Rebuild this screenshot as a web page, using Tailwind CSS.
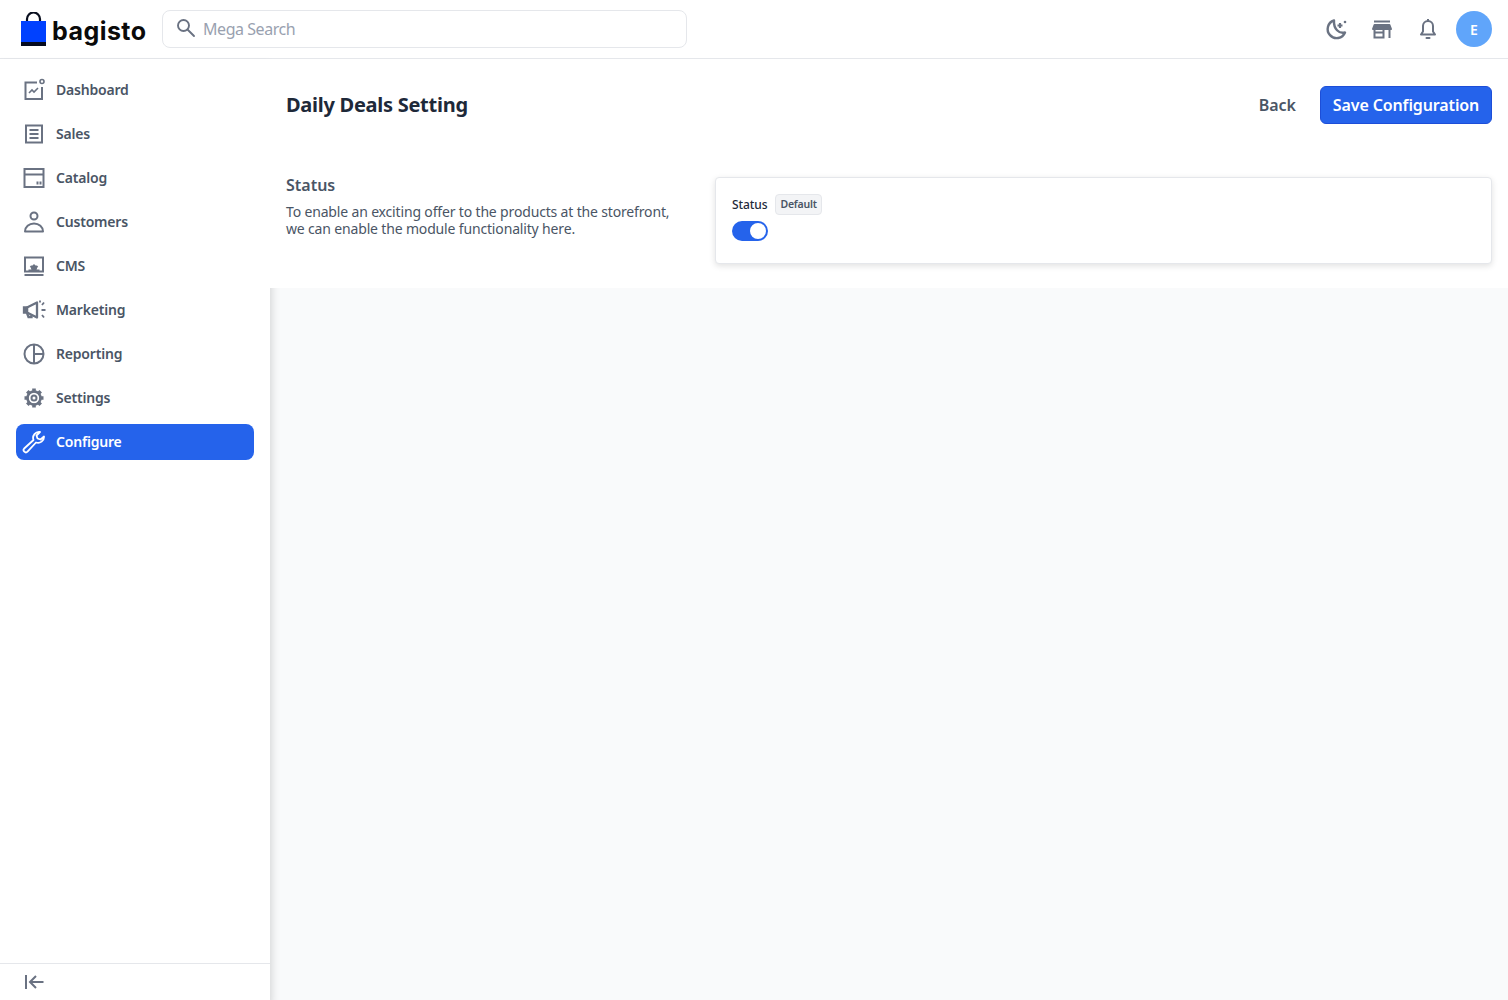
<!DOCTYPE html>
<html lang="en">
<head>
    <meta charset="UTF-8">
    <meta name="viewport" content="width=device-width, initial-scale=1.0">
    <title>Daily Deals Setting</title>
    <script src="https://cdn.jsdelivr.net/npm/@tailwindcss/browser@4"></script>
</head>
<body class="font-['Noto_Sans',sans-serif] bg-[#f9fafb] text-gray-600 h-[1000px] overflow-hidden">
    <!-- Top bar -->
    <header class="h-[59px] bg-white border-b border-gray-200 flex items-center justify-between pl-[20px] pr-[16px]">
        <div class="flex items-center">
            <svg class="w-[27px] h-[35px]" viewBox="0 0 27 35">
                <path d="M7 11V7a6.500 6.500 0 0 1 13 0v4" fill="none" stroke="#0a0f1f" stroke-width="2.200"/>
                <rect x="1" y="9" width="25" height="22" fill="#0041ff"/>
                <rect x="1" y="30" width="25" height="4" fill="#060b1e"/>
            </svg>
            <span class="ml-[5px] w-[110px] pt-[4px] font-['Inter',sans-serif] font-bold text-[25px] leading-none text-[#0a0a0a] tracking-[0.45px]">bagisto</span>
            <div class="h-[38px] w-[525px] border border-gray-200 rounded-lg flex items-center px-[13px]">
                <svg class="w-[20px] h-[20px] text-gray-500 mt-[-3px]" viewBox="0 0 20 20" fill="none" stroke="currentColor" stroke-width="1.900"><circle cx="7.500" cy="7.500" r="5.500"/><path d="M11.500 11.500 18 18" stroke-linecap="round"/></svg>
                <span class="ml-[7px] text-[16px] text-gray-400 tracking-[-0.45px]">Mega Search</span>
            </div>
        </div>
        <div class="flex items-center">
            <svg class="w-[24px] h-[24px] text-gray-500" viewBox="0 0 24 24" fill="none" stroke="currentColor" stroke-width="2.400"><path d="M10 3.500a9 9 0 1 0 11 12c-6 1.500-11.500-3.500-11-12Z" stroke-linejoin="round"/><path d="M16 6v5M13.500 8.500h5" stroke-width="2.200"/><circle cx="21" cy="5" r="1.300" fill="currentColor" stroke="none"/></svg>
            <svg class="w-[22px] h-[22px] ml-[23px] text-gray-500" viewBox="0 0 22 22" fill="none" stroke="currentColor" stroke-width="2"><path d="M3 3.500h16"/><path d="M3.500 7h15l1.500 4H2Z" stroke-linejoin="round" fill="currentColor"/><path d="M3.500 11v8.500h9V11M3.500 14.500h9M18.500 11v9"/></svg>
            <svg class="w-[22px] h-[24px] ml-[24px] text-gray-500" viewBox="0 0 22 24" fill="none" stroke="currentColor" stroke-width="2"><path d="M4 17.500h14l-2-3V9a5 5 0 0 0-10 0v5.500l-2 3Z" stroke-linejoin="round"/><path d="M11 2v2"/><path d="M9.500 21h3" stroke-linecap="round"/></svg>
            <div class="w-[36px] h-[36px] ml-[17px] rounded-full bg-[#60a5fa] text-white text-[14px] font-semibold flex items-center justify-center">E</div>
        </div>
    </header>

    <div class="flex h-[941px]">
        <!-- Sidebar -->
        <aside class="w-[270px] bg-white flex flex-col justify-between shadow-[0_8px_10px_0_rgba(0,0,0,0.2)]">
            <nav class="pt-[13px] px-[16px] flex flex-col gap-[8px]">
                <a class="h-[36px] flex items-center gap-[10px] px-[6px] rounded-lg text-[14px] font-semibold text-gray-600 tracking-[-0.2px]">
                    <svg class="w-[24px] h-[24px] text-gray-500 shrink-0" viewBox="0 0 24 24" fill="none" stroke="currentColor" stroke-width="2"><path d="M15 4.500H3.500v16.500h16.500V9"/><circle cx="20" cy="3.500" r="2" stroke-width="1.600"/><path d="m7 15 3-3 2 2 4-4" stroke-width="1.600"/></svg>
                    <span class="mt-[-2px]">Dashboard</span>
                </a>
                <a class="h-[36px] flex items-center gap-[10px] px-[6px] rounded-lg text-[14px] font-semibold text-gray-600 tracking-[-0.2px]">
                    <svg class="w-[24px] h-[24px] text-gray-500 shrink-0" viewBox="0 0 24 24" fill="none" stroke="currentColor" stroke-width="2"><rect x="4" y="3.500" width="16" height="17"/><path d="M7.500 8h9M7.500 12h9M7.500 16h9"/></svg>
                    <span class="mt-[-2px]">Sales</span>
                </a>
                <a class="h-[36px] flex items-center gap-[10px] px-[6px] rounded-lg text-[14px] font-semibold text-gray-600 tracking-[-0.2px]">
                    <svg class="w-[24px] h-[24px] text-gray-500 shrink-0" viewBox="0 0 24 24" fill="none" stroke="currentColor" stroke-width="2"><rect x="2.500" y="3" width="19" height="18"/><path d="M2.500 8.500h19M15.500 15.500v3M18.500 15.500v3"/></svg>
                    <span class="mt-[-2px]">Catalog</span>
                </a>
                <a class="h-[36px] flex items-center gap-[10px] px-[6px] rounded-lg text-[14px] font-semibold text-gray-600 tracking-[-0.2px]">
                    <svg class="w-[24px] h-[24px] text-gray-500 shrink-0" viewBox="0 0 24 24" fill="none" stroke="currentColor" stroke-width="2"><circle cx="12" cy="6" r="3.500"/><path d="M3 21.500c0-4.500 4-8 9-8s9 3.500 9 8Z" stroke-linejoin="round"/></svg>
                    <span class="mt-[-2px]">Customers</span>
                </a>
                <a class="h-[36px] flex items-center gap-[10px] px-[6px] rounded-lg text-[14px] font-semibold text-gray-600 tracking-[-0.2px]">
                    <svg class="w-[24px] h-[24px] text-gray-500 shrink-0" viewBox="0 0 24 24" fill="none" stroke="currentColor" stroke-width="2"><rect x="3" y="3.500" width="18" height="14"/><path d="M2.500 21h19"/><circle cx="12" cy="14" r="3" stroke="none" fill="currentColor"/><path d="M6.500 16.500h11M12 10.500v2M8.500 12l1.500 1.500M15.500 12 14 13.500"/></svg>
                    <span class="mt-[-2px]">CMS</span>
                </a>
                <a class="h-[36px] flex items-center gap-[10px] px-[6px] rounded-lg text-[14px] font-semibold text-gray-600 tracking-[-0.2px]">
                    <svg class="w-[24px] h-[24px] text-gray-500 shrink-0" viewBox="0 0 24 24" fill="none" stroke="currentColor" stroke-width="2.300"><path d="M5 9.500 15 4.500v15L5 14.500Z" stroke-linejoin="round"/><path d="M5 9.500H2v5h3Z" fill="currentColor"/><path d="m5 15 1.500 4h3v-2"/><path d="M20 7l2-2.500M19.500 12h4M20 17l2 2.500M18 2.500v2" stroke-width="1.800"/></svg>
                    <span class="mt-[-2px]">Marketing</span>
                </a>
                <a class="h-[36px] flex items-center gap-[10px] px-[6px] rounded-lg text-[14px] font-semibold text-gray-600 tracking-[-0.2px]">
                    <svg class="w-[24px] h-[24px] text-gray-500 shrink-0" viewBox="0 0 24 24" fill="none" stroke="currentColor" stroke-width="2"><circle cx="12" cy="12" r="9.500"/><path d="M12 2.500v19M12 12h9.500"/></svg>
                    <span class="mt-[-2px]">Reporting</span>
                </a>
                <a class="h-[36px] flex items-center gap-[10px] px-[6px] rounded-lg text-[14px] font-semibold text-gray-600 tracking-[-0.2px]">
                    <svg class="w-[24px] h-[24px] text-gray-500 shrink-0" viewBox="0 0 24 24" fill="none" stroke="currentColor"><circle cx="12" cy="12" r="6.500" stroke-width="2.600"/><circle cx="12" cy="12" r="2.500" stroke-width="2"/><path d="M12 2.500v4M12 17.500v4M2.500 12h4M17.500 12h4M5.300 5.300l2.800 2.800M15.900 15.900l2.800 2.800M18.700 5.300l-2.800 2.800M8.100 15.900l-2.800 2.800" stroke-width="3.600"/></svg>
                    <span class="mt-[-2px]">Settings</span>
                </a>
                <a class="h-[36px] flex items-center gap-[10px] px-[6px] rounded-lg text-[14px] font-semibold text-white bg-[#2563eb] tracking-[-0.2px]">
                    <svg class="w-[24px] h-[24px] text-white shrink-0" viewBox="0 0 24 24" fill="none" stroke="currentColor" stroke-width="1.800" stroke-linejoin="round"><path d="M22 6.500a6 6 0 0 1-8 6L5.500 21.700a2.300 2.300 0 0 1-3.300-3.200L11.500 10a6 6 0 0 1 6.500-8l-3.500 3.500 1 3 3 1Z"/></svg>
                    <span class="mt-[-2px]">Configure</span>
                </a>
            </nav>
            <div class="h-[37px] border-t border-gray-200 flex items-center px-[22px]">
                <svg class="w-[24px] h-[24px] text-gray-500" viewBox="0 0 24 24" fill="none" stroke="currentColor" stroke-width="2"><path d="M4 5v14M21.500 12H8.500M14 6l-6 6 6 6"/></svg>
            </div>
        </aside>

        <!-- Content -->
        <main class="flex-1">
            <div class="bg-white h-[229px] px-[16px] pb-[24px]">
                <div class="flex items-center justify-between pt-[27px]">
                    <h1 class="text-[20px] font-bold text-gray-800 tracking-[-0.27px]">Daily Deals Setting</h1>
                    <div class="flex items-center gap-[24px]">
                        <a class="text-[16px] font-semibold text-gray-600">Back</a>
                        <button class="h-[38px] w-[172px] rounded-md bg-[#2563eb] border border-[#1d4ed8] text-white text-[16px] font-semibold tracking-[-0.12px]">Save Configuration</button>
                    </div>
                </div>
                <div class="flex mt-[53px]">
                    <div class="w-[429px] shrink-0">
                        <p class="text-[16px] leading-[16px] font-semibold text-gray-600">Status</p>
                        <p class="mt-[10px] w-[390px] text-[14px] leading-[17px] text-gray-600 tracking-[-0.16px]">To enable an exciting offer to the products at the storefront, we can enable the module functionality here.</p>
                    </div>
                    <div class="flex-1 h-[87px] bg-white border border-gray-200 rounded-[4px] shadow-[0_2px_6px_0_rgba(0,0,0,0.12)] p-[16px]">
                        <div class="flex items-center gap-[8px] h-[21px]">
                            <span class="text-[12px] font-medium text-gray-800 tracking-[-0.1px]">Status</span>
                            <span class="h-[21px] px-[4px] flex items-center text-[10.500px] font-semibold text-gray-600 bg-gray-100 border border-gray-200 rounded-[4px] tracking-[-0.2px]">Default</span>
                        </div>
                        <div class="relative w-[36px] h-[20px] mt-[6px] rounded-full bg-[#2563eb]">
                            <span class="absolute right-[2px] top-[2px] w-[16px] h-[16px] rounded-full bg-white"></span>
                        </div>
                    </div>
                </div>
            </div>
        </main>
    </div>
</body>
</html>
